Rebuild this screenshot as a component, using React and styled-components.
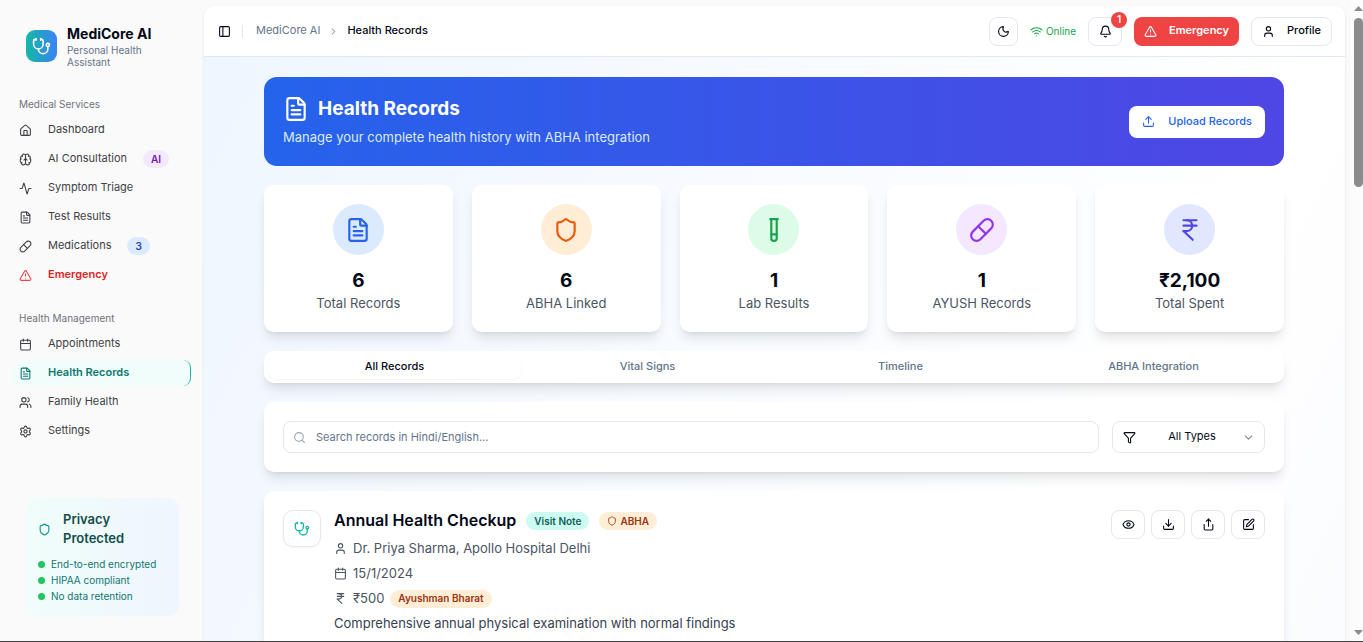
import React from 'react'
import styled, { createGlobalStyle, css } from 'styled-components'
import {
  Activity,
  Bell,
  Brain,
  Calendar,
  ChevronDown,
  ChevronRight,
  Download,
  Eye,
  FileText,
  Funnel,
  House,
  IndianRupee,
  Moon,
  PanelLeft,
  Pill,
  Search,
  Settings,
  Share,
  Shield,
  SquarePen,
  Stethoscope,
  TestTube,
  TriangleAlert,
  Upload,
  User,
  Users,
  Wifi,
} from 'lucide-react'

const services = [
  { label: 'Dashboard', icon: House },
  { label: 'AI Consultation', icon: Brain, badge: 'AI', tone: 'purple' },
  { label: 'Symptom Triage', icon: Activity },
  { label: 'Test Results', icon: FileText },
  { label: 'Medications', icon: Pill, badge: '3', tone: 'blue' },
  { label: 'Emergency', icon: TriangleAlert, danger: true },
]

const management = [
  { label: 'Appointments', icon: Calendar },
  { label: 'Health Records', icon: FileText, active: true },
  { label: 'Family Health', icon: Users },
  { label: 'Settings', icon: Settings },
]

const stats = [
  { value: '6', label: 'Total Records', icon: FileText, tone: 'blue' },
  { value: '6', label: 'ABHA Linked', icon: Shield, tone: 'orange' },
  { value: '1', label: 'Lab Results', icon: TestTube, tone: 'green' },
  { value: '1', label: 'AYUSH Records', icon: Pill, tone: 'purple' },
  { value: '₹2,100', label: 'Total Spent', icon: IndianRupee, tone: 'indigo' },
]

const tabs = ['All Records', 'Vital Signs', 'Timeline', 'ABHA Integration']

const actions = [
  { label: 'View', icon: Eye },
  { label: 'Download', icon: Download },
  { label: 'Share', icon: Share },
  { label: 'Edit', icon: SquarePen },
]

const tones = {
  blue: { bg: '#dbeafe', icon: '#2563eb', text: '#1e40af' },
  orange: { bg: '#ffedd5', icon: '#ea580c', text: '#9a3412' },
  green: { bg: '#dcfce7', icon: '#16a34a', text: '#166534' },
  purple: { bg: '#f3e8ff', icon: '#9333ea', text: '#6b21a8' },
  indigo: { bg: '#e0e7ff', icon: '#4f46e5', text: '#3730a3' },
  teal: { bg: '#ccfbf1', icon: '#14b8a6', text: '#115e59' },
}

function NavGroup({ title, items }) {
  return (
    <Group>
      <GroupTitle>{title}</GroupTitle>
      <NavList>
        {items.map(({ label, icon: Icon, badge, tone, danger, active }) => (
          <li key={label}>
            <NavLink href="#" $danger={danger} $active={active}>
              <Icon size={13} />
              <Label>{label}</Label>
              {badge && <Badge $tone={tone}>{badge}</Badge>}
            </NavLink>
          </li>
        ))}
      </NavList>
    </Group>
  )
}

function Sidebar() {
  return (
    <SidebarContainer>
      <Brand>
        <Logo><Stethoscope size={19} /></Logo>
        <div>
          <BrandName>MediCore AI</BrandName>
          <BrandText>Personal Health Assistant</BrandText>
        </div>
      </Brand>
      <NavGroup title="Medical Services" items={services} />
      <NavGroup title="Health Management" items={management} />
      <Privacy>
        <PrivacyTitle>
          <Shield size={13} />
          <span>Privacy Protected</span>
        </PrivacyTitle>
        <PrivacyList>
          <li>End-to-end encrypted</li>
          <li>HIPAA compliant</li>
          <li>No data retention</li>
        </PrivacyList>
      </Privacy>
    </SidebarContainer>
  )
}

function Topbar() {
  return (
    <TopbarContainer>
      <PlainButton aria-label="Toggle sidebar"><PanelLeft size={13} /></PlainButton>
      <Divider />
      <Breadcrumb>
        <Label as="a" href="#">MediCore AI</Label>
        <ChevronRight size={11} />
        <Label as="strong">Health Records</Label>
      </Breadcrumb>
      <TopActions>
        <OutlineButton $width={29} aria-label="Theme"><Moon size={13} /></OutlineButton>
        <Online><Wifi size={13} />Online</Online>
        <OutlineButton $width={34} aria-label="Notifications">
          <Bell size={13} />
          <Count>1</Count>
        </OutlineButton>
        <EmergencyButton><TriangleAlert size={13} /><Label>Emergency</Label></EmergencyButton>
        <OutlineButton $label><User size={13} /><Label>Profile</Label></OutlineButton>
      </TopActions>
    </TopbarContainer>
  )
}

function RecordCard() {
  return (
    <Record>
      <RecordIcon><Stethoscope size={16} /></RecordIcon>
      <RecordBody>
        <RecordHead>
          <h3>Annual Health Checkup</h3>
          <Badge $tone="teal">Visit Note</Badge>
          <Badge $tone="orange"><Shield size={10} />ABHA</Badge>
        </RecordHead>
        <RecordLine><User size={13} />Dr. Priya Sharma, Apollo Hospital Delhi</RecordLine>
        <RecordLine><Calendar size={13} />15/1/2024</RecordLine>
        <RecordLine>
          <IndianRupee size={13} />₹500
          <Badge $tone="orange">Ayushman Bharat</Badge>
        </RecordLine>
        <Description>Comprehensive annual physical examination with normal findings</Description>
      </RecordBody>
      <RecordActions>
        {actions.map(({ label, icon: Icon }) => (
          <OutlineButton key={label} $width={34} aria-label={label}><Icon size={13} /></OutlineButton>
        ))}
      </RecordActions>
    </Record>
  )
}

function App() {
  return (
    <>
      <GlobalStyle />
      <Shell>
        <Sidebar />
        <Main>
          <Topbar />
          <Content>
            <Container>
              <Hero>
                <div>
                  <HeroTitle><FileText size={26} />Health Records</HeroTitle>
                  <HeroText>Manage your complete health history with ABHA integration</HeroText>
                </div>
                <UploadButton><Upload size={13} /><Label>Upload Records</Label></UploadButton>
              </Hero>
              <Stats>
                {stats.map(({ value, label, icon: Icon, tone }) => (
                  <StatCard key={label}>
                    <StatIcon $tone={tone}><Icon size={26} /></StatIcon>
                    <StatValue>{value}</StatValue>
                    <StatLabel>{label}</StatLabel>
                  </StatCard>
                ))}
              </Stats>
              <Tabs role="tablist">
                {tabs.map((tab, i) => (
                  <Tab key={tab} role="tab" aria-selected={i === 0} $active={i === 0}>{tab}</Tab>
                ))}
              </Tabs>
              <Filters>
                <SearchBox>
                  <Search size={13} />
                  <input type="text" aria-label="Search records" placeholder="Search records in Hindi/English..." />
                </SearchBox>
                <TypeBox>
                  <Funnel size={13} />
                  <select aria-label="Record type" defaultValue="all">
                    <option value="all">All Types</option>
                  </select>
                  <ChevronDown size={13} />
                </TypeBox>
              </Filters>
              <RecordCard />
            </Container>
          </Content>
        </Main>
        <ScrollTrack>
          <Arrow viewBox="0 0 9 5"><path d="M4.5 0 9 5H0z" /></Arrow>
          <Thumb />
          <Arrow viewBox="0 0 9 5"><path d="M0 0h9L4.5 5z" /></Arrow>
        </ScrollTrack>
      </Shell>
    </>
  )
}

export default App

const GlobalStyle = createGlobalStyle`
  * {
    box-sizing: border-box;
  }
  body {
    margin: 0;
    background: #fafafa;
    color: #020817;
    font-family: Inter, 'Noto Sans', sans-serif;
    font-size: 11px;
    line-height: 16px;
  }
  h1, h2, h3, p, ul {
    margin: 0;
    padding: 0;
  }
  ul {
    list-style: none;
  }
  a {
    color: inherit;
    text-decoration: none;
  }
  button, input, select {
    font: inherit;
    color: inherit;
  }
  svg {
    flex-shrink: 0;
  }
`

const cardStyle = css`
  background: #fff;
  border-radius: 10px;
  box-shadow: 0 8px 12px -2px rgba(0, 0, 0, 0.1), 0 3px 5px -3px rgba(0, 0, 0, 0.1);
`

// text next to an icon sits slightly above the icon's middle
const Label = styled.span`
  padding-bottom: 2px;
`

const Shell = styled.div`
  display: flex;
  height: 100vh;
  overflow: hidden;
  border-bottom: 1px solid #3f3f3f;
`

const SidebarContainer = styled.aside`
  display: flex;
  flex-direction: column;
  flex-shrink: 0;
  width: 204px;
  padding: 24px 13px;
`

const Brand = styled.div`
  display: flex;
  align-items: center;
  gap: 10px;
  padding: 0 13px;
  margin-bottom: 27px;
`

const Logo = styled.div`
  display: flex;
  align-items: center;
  justify-content: center;
  width: 31px;
  height: 32px;
  flex-shrink: 0;
  border-radius: 9px;
  color: #fff;
  background: linear-gradient(to right, #14b8a6, #3b82f6);
`

const BrandName = styled.h2`
  font-size: 14px;
  font-weight: 700;
  line-height: 20px;
`

const BrandText = styled.p`
  font-size: 10px;
  line-height: 12px;
  color: #64748b;
`

const Group = styled.nav`
  margin-bottom: 21px;
`

const GroupTitle = styled.p`
  padding: 0 6px;
  margin-bottom: 4px;
  font-size: 10px;
  line-height: 18px;
  color: #71717a;
`

const NavList = styled.ul`
  display: flex;
  flex-direction: column;
  gap: 3px;
`

const NavLink = styled.a`
  display: flex;
  align-items: center;
  gap: 16px;
  height: 26px;
  padding: 0 6px;
  border-radius: 8px;
  color: #3f3f46;

  ${({ $danger }) => $danger && css`
    color: #dc2626;
    font-weight: 600;
    svg {
      color: #ef4444;
    }
  `}
  ${({ $active }) => $active && css`
    color: #0f766e;
    font-weight: 600;
    background: #f0fdfa;
    border-right: 1px solid #14b8a6;
  `}
`

const Badge = styled.span`
  display: inline-flex;
  align-items: center;
  gap: 3px;
  height: 18px;
  padding: 0 8px;
  border-radius: 9px;
  font-size: 10px;
  font-weight: 600;
  white-space: nowrap;
  color: ${({ $tone }) => tones[$tone].text};
  background: ${({ $tone }) => tones[$tone].bg};
`

const Privacy = styled.section`
  margin: auto 12px 1px 13px;
  padding: 12px;
  border-radius: 10px;
  background: linear-gradient(to right, #f0fdfa, #eff6ff);
`

const PrivacyTitle = styled.h3`
  display: flex;
  align-items: center;
  gap: 12px;
  margin-bottom: 8px;
  font-size: 13px;
  font-weight: 600;
  line-height: 19px;
  color: #134e4a;

  svg {
    color: #0d9488;
  }
`

const PrivacyList = styled.ul`
  font-size: 10px;
  line-height: 16px;
  color: #0f766e;

  li {
    display: flex;
    align-items: center;
    gap: 6px;
    white-space: nowrap;
  }
  li::before {
    content: '';
    width: 7px;
    height: 7px;
    border-radius: 50%;
    background: #22c55e;
  }
`

const Main = styled.main`
  display: flex;
  flex-direction: column;
  flex: 1;
  min-width: 0;
  margin: 6px 6px 0 0;
  border-radius: 10px 10px 0 0;
  overflow: hidden;
  background: #fff;
  box-shadow: 0 1px 3px rgba(0, 0, 0, 0.1);
`

const TopbarContainer = styled.header`
  display: flex;
  align-items: center;
  flex-shrink: 0;
  height: 51px;
  padding: 0 13px 0 14px;
  border-bottom: 1px solid #e2e8f0;
`

const PlainButton = styled.button`
  display: flex;
  padding: 0;
  border: 0;
  background: none;
`

const Divider = styled.span`
  width: 1px;
  height: 13px;
  margin: 0 13px 0 11px;
  background: #e2e8f0;
`

const Breadcrumb = styled.nav`
  display: flex;
  align-items: center;
  gap: 8px;
  color: #64748b;

  strong {
    font-weight: 500;
    color: #020817;
  }
`

const TopActions = styled.div`
  display: flex;
  align-items: center;
  gap: 12px;
  margin-left: auto;
`

const OutlineButton = styled.button`
  position: relative;
  display: flex;
  align-items: center;
  justify-content: center;
  gap: 12px;
  width: ${({ $width }) => ($width ? `${$width}px` : 'auto')};
  height: 29px;
  padding: ${({ $label }) => ($label ? '0 10px' : '0')};
  border: 1px solid #e2e8f0;
  border-radius: 8px;
  font-weight: 500;
  background: #fff;
`

const Count = styled.span`
  position: absolute;
  top: -6px;
  right: -6px;
  width: 16px;
  height: 16px;
  border-radius: 50%;
  font-size: 10px;
  font-weight: 600;
  line-height: 15px;
  text-align: center;
  color: #fff;
  background: #ef4444;
`

const Online = styled.span`
  display: flex;
  align-items: center;
  gap: 3px;
  font-size: 10px;
  color: #16a34a;
`

const EmergencyButton = styled.button`
  display: flex;
  align-items: center;
  gap: 12px;
  height: 29px;
  padding: 0 10px;
  border: 0;
  border-radius: 8px;
  font-weight: 600;
  color: #fff;
  background: #ef4444;
`

const Content = styled.div`
  flex: 1;
  min-height: 0;
  overflow: hidden;
  padding: 20px 14px 20px 13px;
  background: linear-gradient(to bottom right, #eff6ff, #fff, #eef2ff) no-repeat;
  background-size: 100% 2270px;
`

const Container = styled.div`
  display: flex;
  flex-direction: column;
  gap: 19px;
  max-width: 1020px;
  margin: 0 auto;
`

const Hero = styled.section`
  display: flex;
  align-items: center;
  justify-content: space-between;
  padding: 19px;
  border-radius: 13px;
  color: #fff;
  background: linear-gradient(to right, #2563eb, #4f46e5);
`

const HeroTitle = styled.h1`
  display: flex;
  align-items: center;
  gap: 9px;
  margin-bottom: 6px;
  font-size: 19px;
  font-weight: 700;
  line-height: 26px;
`

const HeroText = styled.p`
  font-size: 13px;
  line-height: 19px;
  color: #dbeafe;
`

const UploadButton = styled.button`
  display: flex;
  align-items: center;
  gap: 13px;
  height: 32px;
  padding: 0 13px;
  border: 0;
  border-radius: 8px;
  font-weight: 500;
  color: #2563eb;
  background: #fff;
`

const Stats = styled.section`
  display: grid;
  grid-template-columns: repeat(5, 1fr);
  gap: 19px;
`

const StatCard = styled.article`
  ${cardStyle}
  display: flex;
  flex-direction: column;
  align-items: center;
  padding: 19px;
`

const StatIcon = styled.div`
  display: flex;
  align-items: center;
  justify-content: center;
  width: 51px;
  height: 51px;
  margin-bottom: 13px;
  border-radius: 50%;
  color: ${({ $tone }) => tones[$tone].icon};
  background: ${({ $tone }) => tones[$tone].bg};
`

const StatValue = styled.p`
  font-size: 19px;
  font-weight: 700;
  line-height: 26px;
`

const StatLabel = styled.p`
  padding-bottom: 1px;
  font-size: 13px;
  line-height: 18px;
  color: #4b5563;
`

const Tabs = styled.div`
  ${cardStyle}
  display: grid;
  grid-template-columns: repeat(4, 1fr);
  height: 32px;
  padding: 4px;
`

const Tab = styled.button`
  padding: 0 0 2px;
  border: 0;
  border-radius: 8px;
  font-weight: 500;
  color: ${({ $active }) => ($active ? '#020817' : '#64748b')};
  background: none;
  box-shadow: ${({ $active }) => ($active ? '0 1px 2px rgba(0, 0, 0, 0.05)' : 'none')};
`

const Filters = styled.section`
  ${cardStyle}
  display: flex;
  gap: 13px;
  padding: 19px;
`

const fieldStyle = css`
  display: flex;
  align-items: center;
  height: 32px;
  border: 1px solid #e2e8f0;
  border-radius: 8px;
  background: #fff;
`

const SearchBox = styled.div`
  ${fieldStyle}
  flex: 1;
  gap: 10px;
  padding: 0 9px;
  color: #9ca3af;

  input {
    flex: 1;
    min-width: 0;
    padding: 0;
    border: 0;
    outline: 0;
    color: #020817;
    background: none;
  }
  input::placeholder {
    color: #64748b;
  }
`

const TypeBox = styled.div`
  ${fieldStyle}
  width: 153px;
  padding: 0 9px 0 10px;

  select {
    flex: 1;
    min-width: 0;
    padding: 0 0 2px 6px;
    border: 0;
    outline: 0;
    appearance: none;
    text-align-last: center;
    background: none;
  }
  svg:last-child {
    color: #80858f;
  }
`

const Record = styled.article`
  ${cardStyle}
  display: flex;
  align-items: flex-start;
  gap: 13px;
  padding: 19px;
`

const RecordIcon = styled.div`
  display: flex;
  align-items: center;
  justify-content: center;
  flex-shrink: 0;
  width: 38px;
  height: 37px;
  border: 1px solid #e2e8f0;
  border-radius: 10px;
  color: #14b8a6;
  box-shadow: 0 1px 2px rgba(0, 0, 0, 0.05);
`

const RecordBody = styled.div`
  display: flex;
  flex-direction: column;
  flex: 1;
  gap: 6px;
`

const RecordHead = styled.div`
  display: flex;
  align-items: center;
  gap: 10px;
  height: 22px;
  margin-bottom: 1px;

  h3 {
    padding-bottom: 2px;
    font-size: 16px;
    font-weight: 600;
    line-height: 20px;
  }
`

const RecordLine = styled.p`
  display: flex;
  align-items: center;
  gap: 6px;
  font-size: 13px;
  line-height: 19px;
  color: #4b5563;
`

const Description = styled.p`
  font-size: 13px;
  line-height: 19px;
  color: #374151;
`

const RecordActions = styled.div`
  display: flex;
  gap: 6px;
`

const ScrollTrack = styled.div`
  display: flex;
  flex-direction: column;
  align-items: flex-end;
  flex-shrink: 0;
  width: 12px;
  padding: 6px 0;
  background: #fcfcfc;
`

const Arrow = styled.svg`
  width: 9px;
  height: 5px;
  fill: #8b8b8b;
`

const Thumb = styled.div`
  width: 9px;
  height: 169px;
  margin: 7px 0 auto;
  border-radius: 5px;
  background: #8b8b8b;
`
